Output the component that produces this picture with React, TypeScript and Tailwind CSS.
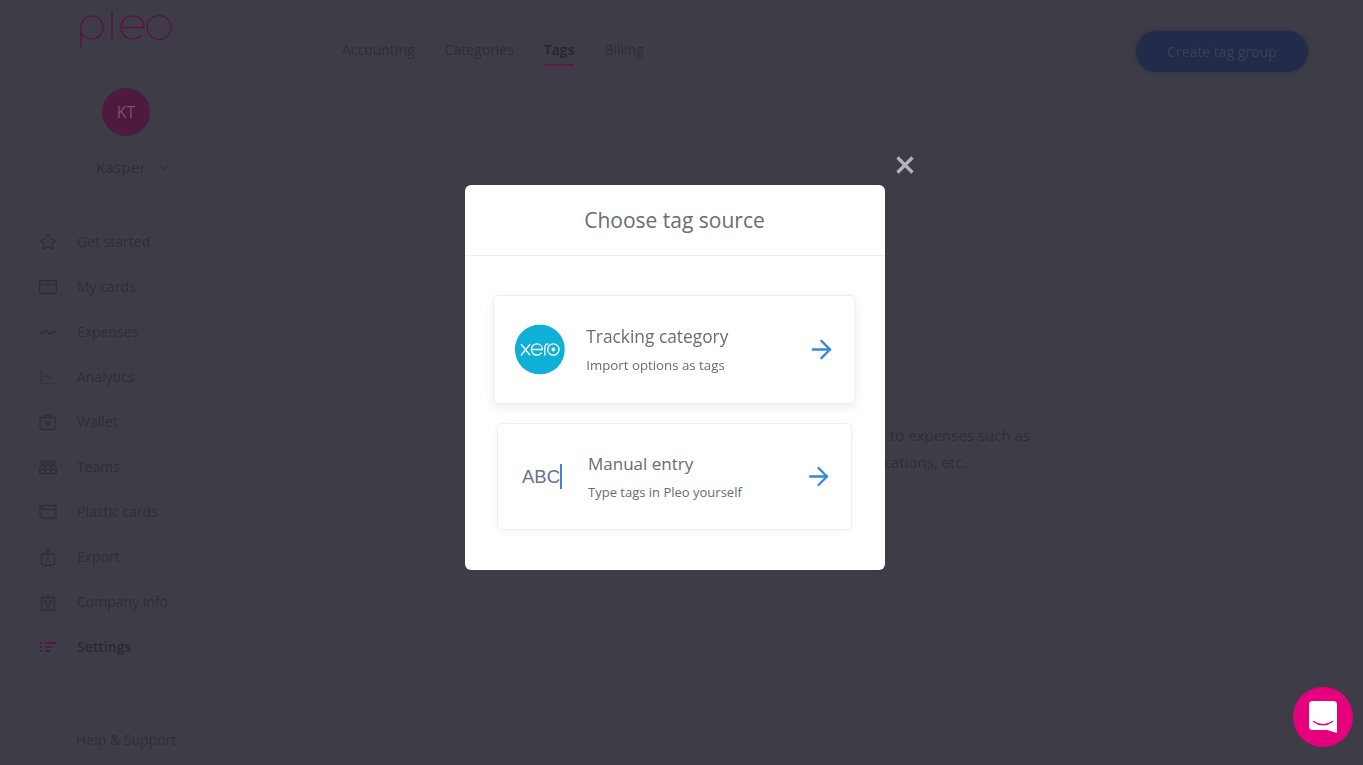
import { ArrowRight, ChartLine, ChevronDown, Star } from "lucide-react";
import type { ReactNode } from "react";

// dimmed sidebar glyphs that lucide has no close match for
function Glyph({ children }: { children: ReactNode }) {
  return (
    <svg
      width="18"
      height="18"
      viewBox="0 0 18 18"
      fill="none"
      stroke="currentColor"
      strokeWidth="1.300"
      strokeLinecap="round"
      strokeLinejoin="round"
    >
      {children}
    </svg>
  );
}

const NAV: { label: string; icon: ReactNode }[] = [
  { label: "Get started", icon: <Star size={18} strokeWidth={1.4} /> },
  {
    label: "My cards",
    icon: (
      <Glyph>
        <rect x="0.700" y="2.500" width="16.600" height="13" rx="1" />
        <path d="M1 6.500h16" />
      </Glyph>
    ),
  },
  {
    label: "Expenses",
    icon: (
      <Glyph>
        <path d="M0.700 9.500h4l2.500-2.700 3.300 4.400 2.300-2h4.500" />
      </Glyph>
    ),
  },
  { label: "Analytics", icon: <ChartLine size={18} strokeWidth={1.4} /> },
  {
    label: "Wallet",
    icon: (
      <Glyph>
        <rect x="1" y="4.500" width="15.500" height="12" rx="2" />
        <path d="M5.500 4.500V2h6.500v2.500" />
        <rect x="7.500" y="9" width="3" height="3" />
      </Glyph>
    ),
  },
  {
    label: "Teams",
    icon: (
      <Glyph>
        <circle cx="4" cy="5" r="1.800" />
        <circle cx="9" cy="4.500" r="1.800" />
        <circle cx="14" cy="5" r="1.800" />
        <path d="M0.700 10c0-1.500 1-2.500 2.500-2.500h11.600c1.500 0 2.500 1 2.500 2.500v5.500H0.700zM0.700 11.500h16.600M6 8v7.500M12 8v7.500" />
      </Glyph>
    ),
  },
  {
    label: "Plastic cards",
    icon: (
      <Glyph>
        <path d="M3 2.500h12.500a1.500 1.500 0 0 1 1.500 1.500v9.500a1.500 1.500 0 0 1-1.500 1.500H4a3 3 0 0 1-3-3V4.500a2 2 0 0 1 2-2z" />
        <path d="M1 6.500h16M3.500 2.500v3" />
      </Glyph>
    ),
  },
  {
    label: "Export",
    icon: (
      <Glyph>
        <rect x="2.500" y="5.500" width="13" height="12" rx="3" />
        <path d="M9 10V0.700M7 2.500l2-1.800 2 1.800M7 13.500h.8M10.200 13.500h.8" />
      </Glyph>
    ),
  },
  {
    label: "Company info",
    icon: (
      <Glyph>
        <path d="M2.500 16.500V4.500h13v12M0.700 16.800h16.600M9 4.500V1M5.500 7.500h2v2h-2zM10.500 7.500h2v2h-2zM7.500 16.500V12h3v4.500" />
      </Glyph>
    ),
  },
];

const TABS = ["Accounting", "Categories", "Tags", "Billing"];

function PleoLogo() {
  return (
    <svg width="94" height="38" viewBox="0 0 94 38" fill="none" aria-label="pleo" className="ml-[80px] block">
      <g stroke="#55183f" strokeWidth="1.500" strokeLinecap="round">
        <path d="M1 36V17C1 9.500 6 5 12 5c6.500 0 11 5 11 11.500S18 28 12 28c-5 0-9-2.500-11-6" />
        <path d="M32 1v27" />
        <path d="M41 16.500h23C64 9.500 59 5 52.500 5 46 5 41 10 41 16.500S46 28 52.500 28c4 0 7-1.500 9.500-4" />
        <circle cx="79" cy="16.500" r="12" />
      </g>
    </svg>
  );
}

function SettingsIcon() {
  return (
    <svg width="18" height="18" viewBox="0 0 18 18" fill="none">
      <path d="M6 5h11M6 9h7" stroke="#55183f" strokeWidth="1.800" />
      <path d="M6 13h5" stroke="#2a2932" strokeWidth="1.800" />
      <path d="M1 5h2M1 9h2M1 13h2" stroke="#55183f" strokeWidth="1.800" />
    </svg>
  );
}

function Sidebar() {
  return (
    <aside className="flex h-full w-[278px] shrink-0 flex-col pt-[11px] pb-[15px] blur-[0.4px]">
      <PleoLogo />
      <div className="ml-[102px] mt-[39px] flex h-12 w-12 items-center justify-center rounded-full bg-[#4d1a40] text-[16px] text-[#6e5a70]">
        KT
      </div>
      <div className="ml-[96px] mt-[19px] flex h-6 items-center gap-[10px] text-[15px] tracking-[0.3px] text-[#2f2e38]">
        Kasper
        <ChevronDown size={15} strokeWidth={2} className="text-[#33323c]" />
      </div>
      <nav className="ml-[39px] mt-[40px] flex flex-col text-[14px] text-[#2f2e38]">
        {NAV.map(({ label, icon }) => (
          <div key={label} className="flex h-[45px] items-center gap-[20px]">
            <span className="flex w-[18px] justify-center">{icon}</span>
            {label}
          </div>
        ))}
        <div className="flex h-[45px] items-center gap-[20px] font-semibold text-[#2a2932]">
          <SettingsIcon />
          Settings
        </div>
      </nav>
      <div className="ml-[76px] mt-auto text-[14px] text-[#2f2e38]">Help &amp; Support</div>
    </aside>
  );
}

function MainBehind() {
  return (
    <main className="flex h-full flex-1 flex-col blur-[0.4px]">
      <header className="flex items-start justify-between pl-[64px] pr-[55px] pt-[31px]">
        <div className="flex gap-[30px] text-[14px] text-[#2f2e38]">
          {TABS.map((t) =>
            t === "Tags" ? (
              <span key={t} className="h-[35px] border-b-2 border-[#5f1a42] pt-[8px] font-semibold text-[#26252e]">
                {t}
              </span>
            ) : (
              <span key={t} className="pt-[8px]">
                {t}
              </span>
            ),
          )}
        </div>
        <button className="flex h-[41px] w-[172px] items-center justify-center rounded-full bg-[#222c4a] text-[14px] text-[#3d4153] shadow-[0_0_5px_rgba(30,40,70,0.6)]">
          Create tag group
        </button>
      </header>
      <p className="mr-[333px] mt-[350px] w-fit self-end whitespace-nowrap text-center text-[15px] leading-[27px] text-[#2f2e38]">
        Tags let you add custom details to expenses such as
        <br />
        for clients, projects, locations, etc.
      </p>
    </main>
  );
}

function XeroLogo() {
  return (
    <svg width="49" height="49" viewBox="0 0 50 50" fill="none" aria-label="xero" className="shrink-0">
      <circle cx="25" cy="25" r="25" fill="#0fb0d8" />
      <g stroke="#fff" strokeWidth="1.300" strokeLinecap="round">
        <path d="M6.500 20l8.500 10.500M15 20l-8.500 10.500" />
        <path d="M16.500 25h11C27.500 21.500 25 19.300 22 19.300S16.500 21.800 16.500 25 19 30.700 22 30.700c2 0 3.500-.8 4.500-2.200" />
        <path d="M30 30.500V23.500c0-2.500 1.500-4 3-4" />
        <circle cx="38.500" cy="25" r="5.700" />
      </g>
      <circle cx="38.500" cy="25" r="1.900" fill="#fff" />
    </svg>
  );
}

function SourceCard({
  art,
  title,
  hint,
  className,
}: {
  art: ReactNode;
  title: string;
  hint: string;
  className: string;
}) {
  return (
    <div
      className={`flex h-[107px] w-[355px] items-center rounded-[5px] border border-[#eeeef0] bg-white pl-5 pr-[18px] ${className}`}
    >
      <div className="flex w-[49px] shrink-0 items-center">{art}</div>
      <div className="ml-[21px] flex-1">
        <div className="text-[17px] leading-6 text-[#696c72]">{title}</div>
        <div className="mt-[7px] text-[13px] leading-[18px] text-[#696c72]">{hint}</div>
      </div>
      <ArrowRight size={29} strokeWidth={1.900} className="text-[#3a85dc]" />
    </div>
  );
}

function Modal() {
  return (
    <div className="relative w-[420px] rounded-[6px] bg-white">
      <button className="absolute -right-[29px] -top-[29px] text-[#b4b4b8]" aria-label="Close">
        <svg width="18" height="18" viewBox="0 0 18 18" fill="none" className="block">
          <path d="M1.500 1.500l15 15M16.500 1.500l-15 15" stroke="currentColor" strokeWidth="3.200" />
        </svg>
      </button>
      <div className="flex h-[71px] items-center justify-center border-b border-[#eeeef0] pr-[1px] pt-[2px] text-[21px] text-[#696c72]">
        Choose tag source
      </div>
      <div className="flex flex-col items-center gap-[20px] pb-[40px] pr-[1px] pt-[40px]">
        <SourceCard
          className="scale-[1.020] shadow-[0_3px_10px_rgba(0,0,0,0.07)]"
          art={<XeroLogo />}
          title="Tracking category"
          hint="Import options as tags"
        />
        <SourceCard
          className="shadow-[0_2px_8px_rgba(0,0,0,0.04)]"
          art={
            <div className="ml-1 flex items-center font-['Liberation_Sans',sans-serif] text-[18.500px] text-[#6c7090]">
              ABC
              <span className="h-[25px] w-[2px] bg-[#4a80c8]" />
            </div>
          }
          title="Manual entry"
          hint="Type tags in Pleo yourself"
        />
      </div>
    </div>
  );
}

function ChatBubble() {
  return (
    <button
      aria-label="Open chat"
      className="absolute bottom-[18px] right-[10px] flex h-[60px] w-[60px] items-center justify-center rounded-full bg-[#e6007e]"
    >
      <svg width="28" height="32" viewBox="0 0 28 32" fill="none" className="block">
        <path d="M3.500 0h21A3.500 3.500 0 0 1 28 3.500V32l-10-3H3.500A3.500 3.500 0 0 1 0 25.500v-22A3.500 3.500 0 0 1 3.500 0z" fill="#fff" />
        <path d="M4.500 20.500c3 2.200 6 3.300 9.500 3.300s6.500-1.100 9.500-3.300" stroke="#e6007e" strokeWidth="1.500" strokeLinecap="round" />
      </svg>
    </button>
  );
}

export default function App() {
  return (
    <div className="relative flex h-screen w-full overflow-hidden bg-[#3e3d47] font-['Open_Sans',sans-serif]">
      <Sidebar />
      <MainBehind />
      <div className="absolute inset-0 flex items-center justify-center pb-[10px] pr-[13px]">
        <Modal />
      </div>
      <ChatBubble />
    </div>
  );
}
